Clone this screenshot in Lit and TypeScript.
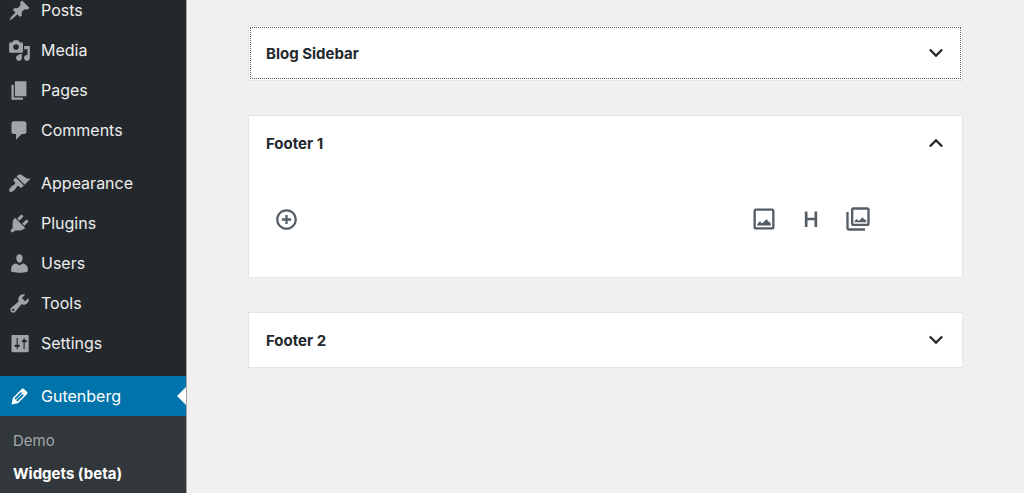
import { LitElement, html, css, svg, nothing } from "lit";
import { customElement, property, state } from "lit/decorators.js";
import { classMap } from "lit/directives/class-map.js";

interface MenuItem {
  label: string;
  icon: string;
  spaced?: boolean;
  children?: { label: string; current?: boolean }[];
}

const MENU: MenuItem[] = [
  {
    label: "Posts",
    icon: "M10.44 3.02l1.82-1.82 6.36 6.35-1.83 1.82c-1.05-.68-2.48-.57-3.41.36l-.75.75c-.92.93-1.04 2.35-.35 3.41l-1.83 1.82-2.41-2.41-2.8 2.79c-.42.42-3.38 2.71-3.8 2.29s1.86-3.39 2.28-3.81l2.79-2.79L4.1 9.36l1.83-1.82c1.05.69 2.48.57 3.4-.36l.75-.75c.93-.92 1.05-2.35.36-3.41z",
  },
  {
    label: "Media",
    icon: "M13 11V4c0-.55-.45-1-1-1h-1.67L9 1H5L3.67 3H2c-.55 0-1 .45-1 1v7c0 .55.45 1 1 1h10c.55 0 1-.45 1-1zM7 4.5c1.38 0 2.5 1.12 2.5 2.5S8.38 9.5 7 9.5 4.5 8.38 4.5 7 5.62 4.5 7 4.5zM14 6h5v10.5c0 1.38-1.12 2.5-2.5 2.5S14 17.88 14 16.5s1.12-2.5 2.5-2.5c.17 0 .34.02.5.05V9h-3V6zm-4 8.05V13h2v3.5c0 1.38-1.12 2.5-2.5 2.5S7 17.88 7 16.5 8.12 14 9.5 14c.17 0 .34.02.5.05z",
  },
  { label: "Pages", icon: "M6 15V2h10v13H6zm-1 1h8v2H3V5h2v11z" },
  {
    label: "Comments",
    icon: "M5 2h9c1.1 0 2 .9 2 2v7c0 1.1-.9 2-2 2h-2l-5 5v-5H5c-1.1 0-2-.9-2-2V4c0-1.1.9-2 2-2z",
  },
  {
    label: "Appearance",
    spaced: true,
    icon: "M14.48 11.06L7.41 3.99l1.5-1.5c.5-.56 2.3-.47 3.51.32 1.21.8 1.43 1.28 2.91 2.1 1.18.64 2.45 1.26 4.45.85zm-.71.71L6.7 4.7 4.93 6.47c-.39.39-.39 1.02 0 1.41l1.06 1.06c.39.39.39 1.03 0 1.42-.6.6-1.43 1.11-2.21 1.69-.35.26-.7.53-1.01.84C1.43 14.23.4 16.08 1.4 17.07c.99 1 2.84-.03 4.18-1.36.31-.31.58-.66.85-1.02.57-.78 1.08-1.61 1.69-2.21.39-.39 1.02-.39 1.41 0l1.06 1.06c.39.39 1.02.39 1.41 0z",
  },
  {
    label: "Plugins",
    icon: "M13.11 4.36L9.87 7.6 8 5.73l3.24-3.24c.35-.34 1.05-.2 1.56.32.52.51.66 1.21.31 1.55zm-8 1.77l.91-1.12 9.01 9.01-1.19.84c-.71.71-2.63 1.16-3.82 1.16H6.14L4.9 17.26c-.59.59-1.54.59-2.12 0-.59-.58-.59-1.53 0-2.12l1.24-1.24v-3.88c0-1.13.4-3.19 1.09-3.89zm7.26 3.97l3.24-3.24c.34-.35 1.04-.21 1.55.31.52.51.66 1.21.31 1.55l-3.24 3.25z",
  },
  {
    label: "Users",
    icon: "M10 9.25c-2.27 0-2.73-3.44-2.73-3.44C7 4.02 7.82 2 9.97 2c2.16 0 2.98 2.02 2.71 3.81 0 0-.41 3.44-2.68 3.44zm0 2.57L12.72 10c2.39 0 4.52 2.33 4.52 4.53v2.49s-3.65 1.13-7.24 1.13c-3.65 0-7.24-1.13-7.24-1.13v-2.49c0-2.25 1.94-4.48 4.47-4.48z",
  },
  {
    label: "Tools",
    icon: "M16.68 9.77c-1.34 1.34-3.3 1.67-4.95.99l-5.41 6.52c-.99.99-2.59.99-3.58 0s-.99-2.59 0-3.57l6.52-5.42c-.68-1.65-.35-3.61.99-4.95 1.28-1.28 3.12-1.62 4.72-1.06l-2.89 2.89 2.82 2.82 2.86-2.87c.53 1.58.18 3.39-1.08 4.65zM3.81 16.21c.4.39 1.04.39 1.43 0 .4-.4.4-1.04 0-1.43-.39-.4-1.03-.4-1.43 0-.39.39-.39 1.03 0 1.43z",
  },
  {
    label: "Settings",
    icon: "M18 16.5V3.5c0-.55-.45-1-1-1H4c-.55 0-1 .45-1 1v13c0 .55.45 1 1 1h13c.55 0 1-.45 1-1zM8.5 11h.9c.55 0 1 .45 1 1s-.45 1-1 1h-.9v1.5c0 .28-.22.5-.5.5s-.5-.22-.5-.5V13h-.9c-.55 0-1-.45-1-1s.45-1 1-1h.9V5.5c0-.28.22-.5.5-.5s.5.22.5.5V11zm5.500-2h-.9c-.55 0-1-.45-1-1s.45-1 1-1h.4V5.5c0-.28.22-.5.5-.5s.5.22.5.5V7h.9c.55 0 1 .45 1 1s-.45 1-1 1h-.9v5.5c0 .28-.22.5-.5.5s-.5-.22-.5-.5V9z",
  },
  {
    label: "Gutenberg",
    spaced: true,
    icon: "M13.89 3.39l2.71 2.72c.46.46.42 1.24.03 1.64l-8.01 8.02-5.56 1.16 1.16-5.58s7.6-7.63 7.99-8.03c.39-.39 1.22-.39 1.68.07zm-2.73 2.79l-5.59 5.61 1.11 1.11 5.54-5.65zm-2.97 8.23l5.58-5.6-1.07-1.08-5.59 5.6z",
    children: [{ label: "Demo" }, { label: "Widgets (beta)", current: true }],
  },
];

@customElement("admin-menu")
export class AdminMenu extends LitElement {
  static styles = css`
    :host {
      display: block;
      overflow: hidden;
      background: #23282d;
      border-right: 1px solid #a3a5a7;
    }
    ul {
      list-style: none;
      margin: 0;
      padding: 0;
    }
    /* The menu is scrolled slightly past its first entry. */
    .menu {
      margin-top: -10px;
    }
    .spaced {
      margin-top: 13px;
    }
    a {
      color: #eee;
      text-decoration: none;
    }
    .link {
      display: flex;
      align-items: center;
      gap: 10px;
      height: 40px;
      padding-left: 8px;
      font-size: 16px;
      position: relative;
    }
    .link svg {
      width: 23px;
      height: 23px;
      flex: none;
      fill: #a0a5aa;
    }
    .open .link {
      background: #0073aa;
      color: #fff;
    }
    .open .link svg {
      fill: #fff;
    }
    .open .link::after {
      content: "";
      position: absolute;
      right: 0;
      top: 50%;
      margin-top: -9px;
      border: 9px solid transparent;
      border-left-width: 0;
      border-right-color: #fff;
    }
    .sub {
      background: #32373c;
      padding: 8px 0;
    }
    .sub a {
      display: block;
      padding-left: 13px;
      font-size: 15px;
      line-height: 33px;
      color: #a3a7ab;
    }
    .sub .current {
      color: #fff;
      font-weight: 700;
    }
  `;

  render() {
    return html`<nav aria-label="Main menu">
      <ul class="menu">
        ${MENU.map(
          (item) => html`<li class=${classMap({ spaced: !!item.spaced, open: !!item.children })}>
            <a class="link" href="#">
              <svg viewBox="0 0 20 20" aria-hidden="true"><path fill-rule="evenodd" d=${item.icon}></path></svg>
              <span>${item.label}</span>
            </a>
            ${item.children
              ? html`<ul class="sub">
                  ${item.children.map(
                    (c) => html`<li><a href="#" class=${classMap({ current: !!c.current })}>${c.label}</a></li>`
                  )}
                </ul>`
              : nothing}
          </li>`
        )}
      </ul>
    </nav>`;
  }
}

const ICONS = {
  image: svg`<path d="M19 3H5c-1.1 0-2 .9-2 2v14c0 1.1.9 2 2 2h14c1.1 0 2-.9 2-2V5c0-1.1-.9-2-2-2zm0 16H5V5h14z"/><path d="M6.200 17.500v-1l2.300-2.600 1.600 1.700 1.200-.5 2.900-3 1.600 2.300.8-.3 1.200 2v1.400z"/>`,
  heading: svg`<path d="M6.700 5.500H9v5.400h6V5.500h2.300v13.300H15v-5.700H9v5.700H6.700z"/>`,
  gallery: svg`<path d="M20 2H8C6.900 2 6 2.900 6 4v12c0 1.100.9 2 2 2h12c1.100 0 2-.9 2-2V4c0-1.100-.9-2-2-2zm0 14H8V4h12z"/><path d="M9 14.700v-.8l1.900-2 1.500 1.500 1-.4 2.500-2.600 1.500 2 .7-.2 1 1.600v.9z"/><path d="M2 6v14c0 1.100.9 2 2 2h14v-2H4V6z"/>`,
};

@customElement("widget-area")
export class WidgetArea extends LitElement {
  @property() heading = "";
  @property({ type: Boolean }) open = false;
  @property({ type: Boolean }) focused = false;

  static styles = css`
    :host {
      display: block;
      background: #fff;
      border: 1px solid #e2e4e7;
    }
    h2 {
      margin: 0;
      font-size: 15px;
    }
    button {
      font: inherit;
      color: inherit;
      background: none;
      border: 0;
      padding: 0;
      cursor: pointer;
    }
    svg {
      display: block;
      width: 28px;
      height: 28px;
      fill: currentColor;
    }
    .toggle {
      display: flex;
      align-items: center;
      justify-content: space-between;
      width: 100%;
      height: 54px;
      padding: 0 12px 0 17px;
      font-weight: 700;
      color: #23282d;
    }
    .focused,
    .toggle:focus-visible {
      outline: 1px dotted #555d66;
      outline-offset: -2px;
    }
    .up {
      transform: rotate(180deg);
    }
    .body {
      display: flex;
      align-items: center;
      justify-content: space-between;
      padding: 35px 90px 44px 26px;
      color: #555d66;
    }
    .insert svg {
      width: 23px;
      height: 23px;
    }
    .shortcuts {
      display: flex;
      gap: 19px;
    }
  `;

  render() {
    return html`
      <h2>
        <button
          class=${classMap({ toggle: true, focused: this.focused })}
          aria-expanded=${this.open}
          @click=${() => (this.open = !this.open)}
        >
          <span>${this.heading}</span>
          <svg class=${classMap({ up: this.open })} viewBox="0 0 24 24" aria-hidden="true">
            <path d="M7.410 8.290 12 12.870l4.590-4.580L18 9.700l-6 6-6-6z"></path>
          </svg>
        </button>
      </h2>
      ${this.open
        ? html`<div class="body">
            <button class="insert" aria-label="Add block">
              <svg viewBox="0 0 20 20">
                <path
                  d="M10 1c-5 0-9 4-9 9s4 9 9 9 9-4 9-9-4-9-9-9zm0 16c-3.900 0-7-3.100-7-7s3.100-7 7-7 7 3.100 7 7-3.100 7-7 7zm1-11H9v3H6v2h3v3h2v-3h3V9h-3V6z"
                ></path>
              </svg>
            </button>
            <div class="shortcuts">
              <button aria-label="Add Image"><svg viewBox="0 0 24 24">${ICONS.image}</svg></button>
              <button aria-label="Add Heading"><svg viewBox="0 0 24 24">${ICONS.heading}</svg></button>
              <button aria-label="Add Gallery"><svg viewBox="0 0 24 24">${ICONS.gallery}</svg></button>
            </div>
          </div>`
        : nothing}
    `;
  }
}

@customElement("app-root")
export class AppRoot extends LitElement {
  @state() private areas = [
    { heading: "Blog Sidebar", open: false, focused: true },
    { heading: "Footer 1", open: true, focused: false },
    { heading: "Footer 2", open: false, focused: false },
  ];

  static styles = css`
    :host {
      display: grid;
      grid-template-columns: 187px minmax(0, 1fr);
      height: 100vh;
      overflow: hidden;
      background: #f0f0f0;
      font-family: Inter, "Liberation Sans", sans-serif;
    }
    main {
      display: flex;
      flex-direction: column;
      gap: 34px;
      padding: 25px 61px;
    }
  `;

  render() {
    return html`
      <admin-menu></admin-menu>
      <main>
        ${this.areas.map(
          (a) => html`<widget-area .heading=${a.heading} .open=${a.open} .focused=${a.focused}></widget-area>`
        )}
      </main>
    `;
  }
}
